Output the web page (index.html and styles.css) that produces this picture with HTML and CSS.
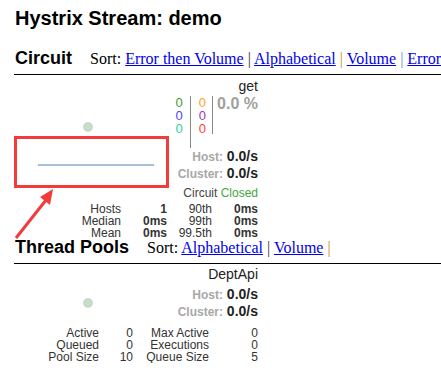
FILE: index.html
```html
<!DOCTYPE html>
<html lang="en">
<head>
    <meta charset="UTF-8">
    <meta name="viewport" content="width=device-width, initial-scale=1.0">
    <title>Hystrix Stream: demo</title>
    <link rel="stylesheet" href="styles.css">
</head>
<body>
    <h1>Hystrix Stream: demo</h1>

    <div class="section-head">
        <h2>Circuit</h2>
        <div class="sort">Sort: <a href="#">Error then Volume</a> <span class="sep">|</span> <a href="#">Alphabetical</a> <span class="sep orange">|</span> <a href="#">Volume</a> <span class="sep blue">|</span> <a href="#">Error</a></div>
    </div>

    <div class="monitor">
        <div class="monitor-top">
            <div class="chart">
                <div class="dot circuit-dot"></div>
                <div class="spark-box">
                    <svg width="149" height="46" viewBox="0 0 149 46">
                        <line x1="21" y1="26" x2="137" y2="26" stroke="#a7c0d9" stroke-width="2"/>
                    </svg>
                </div>
            </div>
            <div class="info">
                <div class="name">get</div>
                <div class="counters">
                    <div class="col">
                        <div class="green">0</div>
                        <div class="blue">0</div>
                        <div class="teal">0</div>
                    </div>
                    <div class="col mid">
                        <div class="orange">0</div>
                        <div class="purple">0</div>
                        <div class="red">0</div>
                    </div>
                    <div class="pct">0.0 %</div>
                </div>
                <div class="rate"><span class="lbl">Host:</span> <span class="val">0.0/s</span></div>
                <div class="rate"><span class="lbl">Cluster:</span> <span class="val">0.0/s</span></div>
                <div class="status">Circuit <span class="closed">Closed</span></div>
            </div>
        </div>
        <div class="stats circuit-stats">
            <span>Hosts</span><span class="v">1</span><span>90th</span><span class="v">0ms</span>
            <span>Median</span><span class="v">0ms</span><span>99th</span><span class="v">0ms</span>
            <span>Mean</span><span class="v">0ms</span><span>99.5th</span><span class="v">0ms</span>
        </div>
    </div>

    <div class="section-head pools-head">
        <h2>Thread Pools</h2>
        <div class="sort">Sort: <a href="#">Alphabetical</a> <span class="sep">|</span> <a href="#">Volume</a> <span class="sep orange">|</span></div>
    </div>

    <div class="monitor">
        <div class="monitor-top">
            <div class="chart">
                <div class="dot pool-dot"></div>
            </div>
            <div class="info">
                <div class="name pool-name">DeptApi</div>
                <div class="rate pool-host"><span class="lbl">Host:</span> <span class="val">0.0/s</span></div>
                <div class="rate"><span class="lbl">Cluster:</span> <span class="val">0.0/s</span></div>
            </div>
        </div>
        <div class="stats pool-stats">
            <span>Active</span><span>0</span><span>Max Active</span><span>0</span>
            <span>Queued</span><span>0</span><span>Executions</span><span>0</span>
            <span>Pool Size</span><span>10</span><span>Queue Size</span><span>5</span>
        </div>
    </div>

    <!-- annotation arrow pointing at the chart -->
    <svg class="arrow" width="70" height="250" viewBox="0 0 70 250">
        <line x1="16" y1="238" x2="46" y2="200" stroke="#f23c3c" stroke-width="3"/>
        <polygon points="53,189 40,197 50,205" fill="#f23c3c"/>
    </svg>
</body>
</html>
```

FILE: styles.css
```css
body {
    margin: 0;
    padding: 7px 0 0 15px;
    font-family: 'Liberation Sans', Arial, sans-serif;
    color: #000;
    background-color: #fff;
    overflow: hidden;
    position: relative;
}
h1 {
    margin: 0;
    font-size: 20px;
    line-height: 23px;
    font-weight: bold;
}
.section-head {
    display: flex;
    align-items: baseline;
    margin: 18px 0 0 -1px;
    padding: 0 0 5px 1px;
    border-bottom: 1px solid #000;
    white-space: nowrap;
}
.section-head h2 {
    margin: 0 18px 0 0;
    font-size: 18px;
    line-height: 21px;
    font-weight: bold;
}
.pools-head {
    margin-top: -2px;
}
.sort {
    font-family: 'Liberation Serif', 'Times New Roman', serif;
    font-size: 16px;
    line-height: 17px;
}
.sort a {
    color: #0000ee;
}
.sep {
    color: #333;
}
.sep.orange {
    color: #c98a22;
}
.sep.blue {
    color: #5a8fd6;
}

.monitor {
    width: 243px;
    color: #333;
}
.monitor-top {
    display: grid;
    grid-template-columns: 154px 89px;
}
.dot {
    width: 10px;
    height: 10px;
    border-radius: 50%;
    background-color: #c9dbc9;
    margin-left: 68px;
}
.circuit-dot {
    margin-top: 47px;
}
.pool-dot {
    margin-top: 34px;
}
.spark-box {
    box-sizing: border-box;
    width: 155px;
    height: 52px;
    margin: 4px 0 0 -1px;
    border: 3px solid #f23c3c;
}
.spark-box svg {
    display: block;
}

.info {
    text-align: right;
}
.name {
    font-size: 14px;
    line-height: 16px;
    padding-top: 3px;
    color: #222;
}
.pool-name {
    padding-top: 2px;
}
.counters {
    display: flex;
    justify-content: flex-end;
    height: 52px;
    margin-top: 2px;
    font-size: 13px;
    line-height: 13px;
}
.counters .col {
    padding-right: 7px;
}
.counters .col.mid {
    border-left: 1px solid #888;
    padding: 0 6px 0 8px;
}
.pct {
    align-self: flex-start;
    height: 38px;
    border-left: 1px solid #888;
    padding-left: 4px;
    font-size: 16px;
    font-weight: bold;
    line-height: 16px;
    color: #a0a0a0;
}
.green { color: #3e9a36; }
.blue { color: #4848ff; }
.teal { color: #30d2a8; }
.orange { color: #ffa41c; }
.purple { color: #a23ab0; }
.red { color: #ff3c3c; }

.rate {
    font-size: 14px;
    line-height: 16px;
}
.pool-host {
    margin-top: 4px;
}
.rate .lbl {
    font-size: 12px;
    font-weight: bold;
    color: #a8a8a8;
}
.rate .val {
    font-weight: bold;
    color: #222;
}
.status {
    margin-top: 4px;
    font-size: 12px;
    line-height: 14px;
    color: #444;
}
.closed {
    color: #3fa93f;
}

.stats {
    display: grid;
    font-size: 12px;
    line-height: 12px;
    text-align: right;
    color: #333;
}
.circuit-stats {
    grid-template-columns: 106px 46px 45px 46px;
    margin-top: 3px;
}
.circuit-stats .v {
    font-weight: bold;
}
.pool-stats {
    grid-template-columns: 84px 34px 76px 49px;
    margin-top: 7px;
}

.arrow {
    position: absolute;
    left: 0;
    top: 0;
    pointer-events: none;
}
```
